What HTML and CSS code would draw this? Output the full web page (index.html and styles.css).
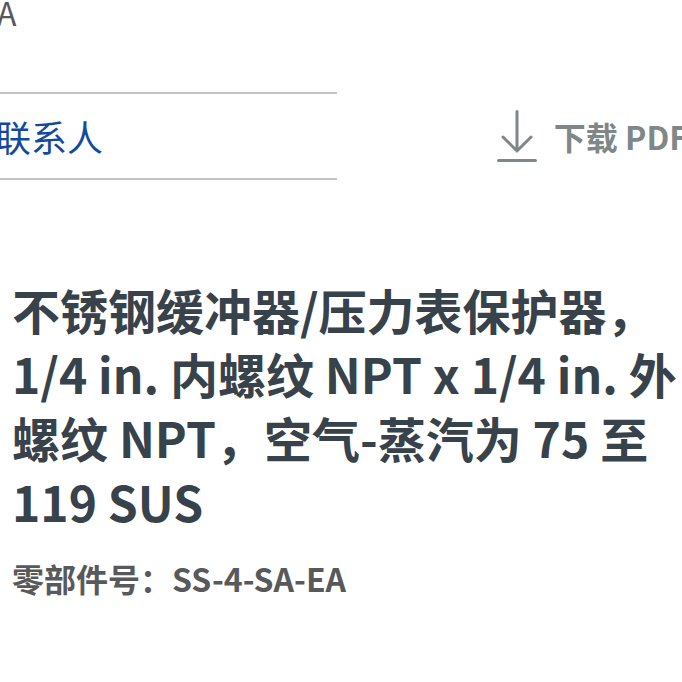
FILE: index.html
```html
<!DOCTYPE html>
<html lang="zh-CN">
<head>
<meta charset="UTF-8" />
<meta name="viewport" content="width=device-width, initial-scale=1" />
<title>SS-4-SA-EA</title>
<link rel="stylesheet" href="styles.css">
</head>
<body>

<div class="breadcrumb">A</div>

<div class="toolbar">
  <div class="contact">
    <a href="#contact">联系人</a>
  </div>
  <a class="download" href="#pdf">
    <svg class="download-icon" viewBox="0 0 40 52" aria-hidden="true">
      <path d="M20 1.500v39M6 27l14 14 14-14M1.500 50.500h37" />
    </svg>
    <span>下载 PDF</span>
  </a>
</div>

<main class="product">
  <h1>不锈钢缓冲器/压力表保护器，1/4 in. 内螺纹 NPT x 1/4 in. 外螺纹 NPT，空气-蒸汽为 75 至 119 SUS</h1>
  <p class="part-number">零部件号：SS-4-SA-EA</p>
</main>

</body>
</html>
```
FILE: styles.css
```css
body {
  margin: 0;
  font-family: "Noto Sans CJK SC", sans-serif;
  background: #fff;
  overflow-x: hidden;
}
.breadcrumb {
  height: 92px;
  margin-left: -3px;
  font-size: 32px;
  line-height: 24px;
  color: #58595b;
}
.toolbar {
  display: flex;
  justify-content: space-between;
  align-items: center;
}
.contact {
  flex: 0 0 337px;
  border-top: 2px solid #c4c4c4;
  border-bottom: 2px solid #c4c4c4;
}
.contact a {
  display: block;
  margin-left: -5px;
  font-size: 36px;
  line-height: 84px;
  color: #134a9c;
  text-decoration: none;
}
.download {
  display: flex;
  align-items: center;
  gap: 17px;
  margin-right: -6px;
  font-size: 32px;
  font-weight: bold;
  color: #7f8788;
  text-decoration: none;
  white-space: nowrap;
}
.download-icon {
  width: 40px;
  height: 52px;
  fill: none;
  stroke: #7f8788;
  stroke-width: 3;
  stroke-linecap: round;
  stroke-linejoin: round;
}
.product {
  padding: 97px 0 0 12px;
}
h1 {
  margin: 0;
  font-size: 48px;
  line-height: 64px;
  color: #37424a;
}
.part-number {
  margin: 21px 0 0;
  font-size: 32px;
  line-height: 48px;
  font-weight: bold;
  color: #58595b;
}
```
